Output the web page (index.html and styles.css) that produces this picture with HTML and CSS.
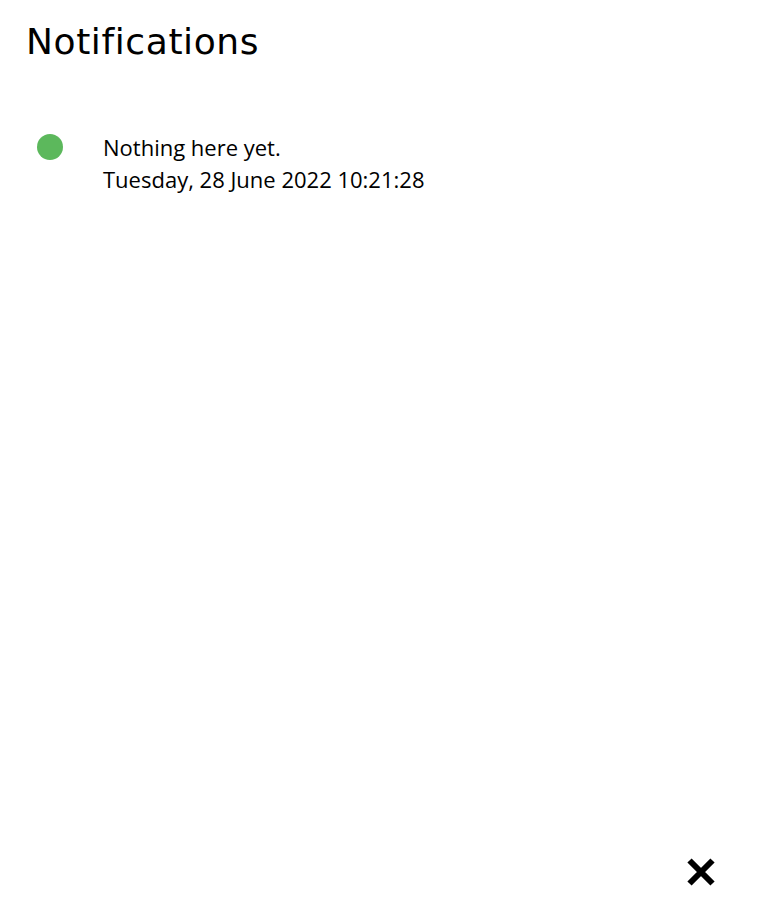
FILE: index.html
```html
<!DOCTYPE html>
<html>
<head>
<meta charset="utf-8">
<link rel="stylesheet" href="styles.css">
</head>
<body>
<div class="page">
  <h1 class="title">Notifications</h1>
  <ul class="list">
    <li class="item">
      <span class="dot"></span>
      <div class="text">
        <div class="msg">Nothing here yet.</div>
        <div class="time">Tuesday, 28 June 2022 10:21:28</div>
      </div>
    </li>
  </ul>
  <div class="footer">
    <button class="close" aria-label="Close">
      <svg width="30" height="30" viewBox="0 0 30 30"><path d="M3.5 3.5 L26.5 26.5 M26.5 3.5 L3.5 26.5" stroke="#000" stroke-width="6" fill="none"/></svg>
    </button>
  </div>
</div>
</body>
</html>
```
FILE: styles.css
```css
html, body { margin: 0; padding: 0; background: #fff; }
.page {
  height: 917px;
  display: flex;
  flex-direction: column;
  box-sizing: border-box;
  padding: 18px 26px 0 26px;
}
.title {
  margin: 0;
  font-family: "DejaVu Sans", sans-serif;
  font-weight: normal;
  font-size: 36px;
  letter-spacing: 0.6px;
  line-height: 48px;
  color: #000;
}
.list { list-style: none; margin: 66px 0 0 0; padding: 0; }
.item { display: flex; align-items: flex-start; }
.dot {
  width: 26px; height: 26px; border-radius: 50%;
  background: #5cb85c;
  margin: 2px 0 0 11px;
  flex: none;
}
.text {
  margin: -1px 0 0 40px;
  font-family: "Open Sans", sans-serif;
  font-size: 22px;
  line-height: 32px;
  color: #000;
}
.footer { margin-top: auto; display: flex; justify-content: flex-end; padding: 0 15px 30px 0; }
.close { border: 0; background: none; padding: 0; width: 30px; height: 30px; cursor: pointer; }
.close svg { display: block; }
```
